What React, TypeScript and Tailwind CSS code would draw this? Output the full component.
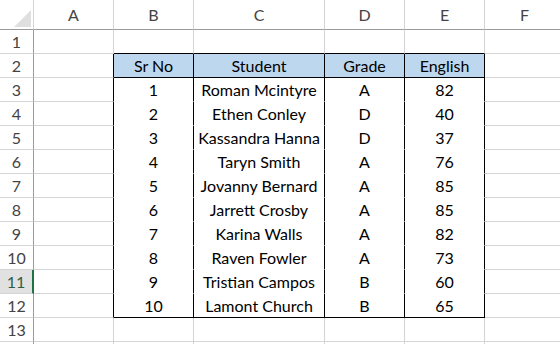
const columns = ['A', 'B', 'C', 'D', 'E', 'F'];

const students = [
  { no: 1, name: 'Roman Mcintyre', grade: 'A', english: 82 },
  { no: 2, name: 'Ethen Conley', grade: 'D', english: 40 },
  { no: 3, name: 'Kassandra Hanna', grade: 'D', english: 37 },
  { no: 4, name: 'Taryn Smith', grade: 'A', english: 76 },
  { no: 5, name: 'Jovanny Bernard', grade: 'A', english: 85 },
  { no: 6, name: 'Jarrett Crosby', grade: 'A', english: 85 },
  { no: 7, name: 'Karina Walls', grade: 'A', english: 82 },
  { no: 8, name: 'Raven Fowler', grade: 'A', english: 73 },
  { no: 9, name: 'Tristian Campos', grade: 'B', english: 60 },
  { no: 10, name: 'Lamont Church', grade: 'B', english: 65 },
];

// row 14 is only a sliver at the bottom edge, so its number is not shown
const ROWS = 14;
const SELECTED_ROW = 11;

function cellValue(row: number, col: number): string {
  // col 1 = A ... col 5 = E
  if (row === 2) {
    return ['', '', 'Sr No', 'Student', 'Grade', 'English', ''][col];
  }
  const s = students[row - 3];
  if (!s) return '';
  if (col === 2) return String(s.no);
  if (col === 3) return s.name;
  if (col === 4) return s.grade;
  if (col === 5) return String(s.english);
  return '';
}

function DataCell({ row, col }: { row: number; col: number }) {
  const inTable = row >= 2 && row <= 12 && col >= 2 && col <= 5;
  const leftOfTable = row >= 2 && row <= 12 && col === 1;
  const aboveTable = row === 1 && col >= 2 && col <= 5;

  let right = 'border-r-[#d4d4d4]';
  if (inTable || leftOfTable) right = 'border-r-black';

  let bottom = 'border-b-[#d4d4d4]';
  if (aboveTable) bottom = 'border-b-black';
  else if (inTable) bottom = row === 2 || row === 12 ? 'border-b-black' : 'border-b-white';

  const bg = inTable && row === 2 ? 'bg-[#bdd7ee]' : 'bg-white';

  return (
    <div
      className={`flex items-center justify-center border-r border-b ${right} ${bottom} ${bg} text-[16px] text-black leading-none`}
    >
      {cellValue(row, col)}
    </div>
  );
}

export default function App() {
  const rows = Array.from({ length: ROWS }, (_, i) => i + 1);

  return (
    <div className="w-[560px] h-[344px] overflow-hidden bg-white font-['Lato','Carlito',sans-serif]">
      <div className="grid w-[565px] grid-cols-[34px_80px_80px_131px_80px_80px_80px] grid-rows-[30px_repeat(14,24px)]">
        {/* corner */}
        <div className="relative border-r border-b border-r-[#d4d4d4] border-b-[#9b9b9b] bg-white">
          <svg className="absolute left-[14px] top-[10px]" width="17" height="17" viewBox="0 0 17 17">
            <polygon points="17,0 17,17 0,17" fill="#dfdfdf" />
          </svg>
        </div>
        {columns.map((c) => (
          <div
            key={c}
            className="flex items-center justify-center border-r border-b border-r-[#d4d4d4] border-b-[#9b9b9b] bg-white text-[16px] text-[#444444] leading-none"
          >
            {c}
          </div>
        ))}

        {rows.map((r) => (
          <div key={r} className="contents">
            {r === SELECTED_ROW ? (
              <div className="flex items-center justify-center border-r-2 border-b border-r-[#217346] border-b-[#d4d4d4] bg-[#e1e1e1] text-[16px] text-[#2c5e3f] leading-none">
                {r}
              </div>
            ) : (
              <div className="flex items-center justify-center border-r border-b border-r-[#9b9b9b] border-b-[#d4d4d4] bg-white text-[16px] text-[#444444] leading-none">
                {r < ROWS ? r : ''}
              </div>
            )}
            {columns.map((_, ci) => (
              <DataCell key={ci} row={r} col={ci + 1} />
            ))}
          </div>
        ))}
      </div>
    </div>
  );
}
